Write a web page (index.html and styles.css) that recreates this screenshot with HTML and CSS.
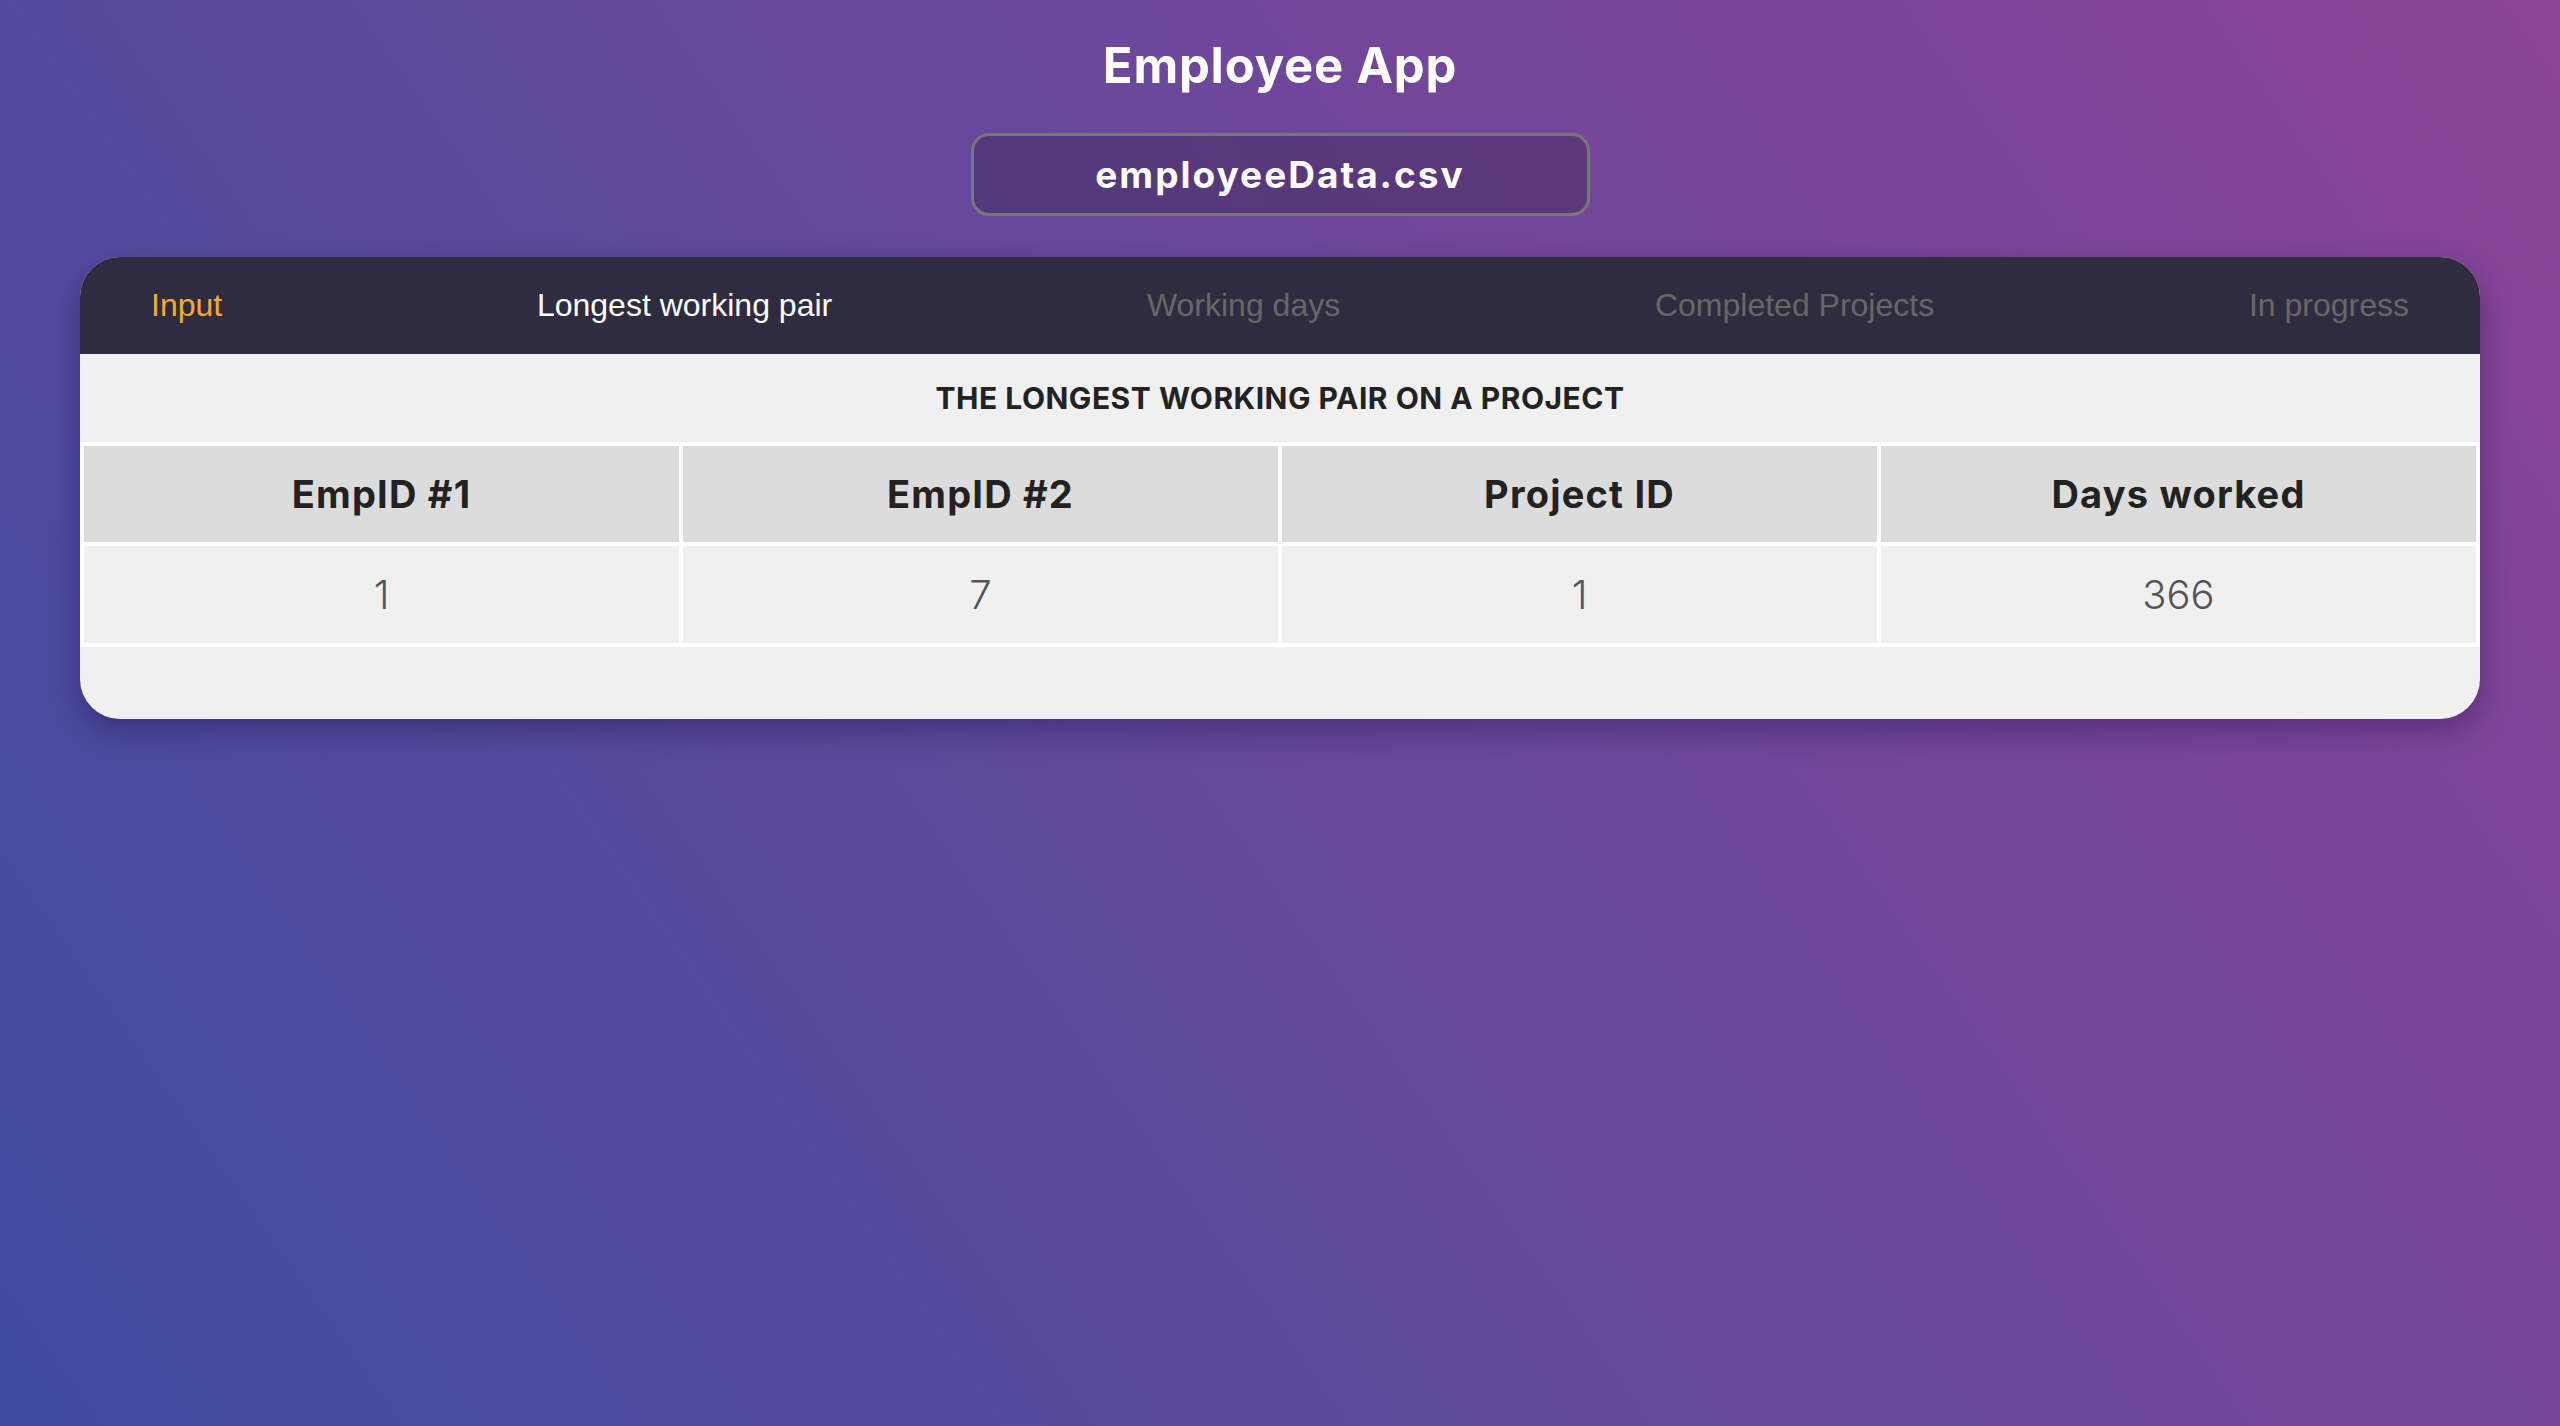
FILE: index.html
```html
<!DOCTYPE html>
<html lang="en">
<head>
<meta charset="utf-8">
<title>Employee App</title>
<link rel="stylesheet" href="styles.css">
</head>
<body>
  <header class="app-header">
    <h1 class="app-title">Employee App</h1>
    <button class="file-button" type="button">employeeData.csv</button>
  </header>
  <main class="card">
    <nav class="tabs">
      <span class="tab tab-input">Input</span>
      <span class="tab tab-active">Longest working pair</span>
      <span class="tab">Working days</span>
      <span class="tab">Completed Projects</span>
      <span class="tab">In progress</span>
    </nav>
    <section class="panel">
      <h2 class="panel-title">THE LONGEST WORKING PAIR ON A PROJECT</h2>
      <table class="pairs">
        <thead>
          <tr>
            <th>EmpID #1</th>
            <th>EmpID #2</th>
            <th>Project ID</th>
            <th>Days worked</th>
          </tr>
        </thead>
        <tbody>
          <tr>
            <td>1</td>
            <td>7</td>
            <td>1</td>
            <td>366</td>
          </tr>
        </tbody>
      </table>
    </section>
  </main>
</body>
</html>
```

FILE: styles.css
```css
html, body {
  margin: 0;
  padding: 0;
}

body {
  min-height: 100vh;
  background: linear-gradient(55deg, #3f4ca0 0%, #8c4497 100%);
  font-family: "Inter", "Open Sans", sans-serif;
  color: #222;
}

.app-header {
  display: flex;
  flex-direction: column;
  align-items: center;
  padding-top: 37px;
}

.app-title {
  margin: 0;
  font-size: 49px;
  line-height: 58px;
  font-weight: 700;
  color: #fff;
  letter-spacing: 0.8px;
}

.file-button {
  margin-top: 38px;
  width: 619px;
  height: 83px;
  border: 3px solid #777;
  border-radius: 18px;
  background: rgba(0, 0, 0, 0.2);
  color: #fff;
  font-family: "Inter", "Open Sans", sans-serif;
  font-size: 37px;
  font-weight: 700;
  letter-spacing: 2px;
  padding: 0;
}

.card {
  margin: 41px 80px 0;
  background: #f0f0f0;
  border-radius: 40px;
  overflow: hidden;
  box-shadow: 0 12px 30px rgba(20, 10, 60, 0.35);
  padding-bottom: 72px;
}

.tabs {
  display: flex;
  justify-content: space-between;
  align-items: center;
  height: 97px;
  padding: 0 71px;
  background: #2f2c3f;
  font-family: "Liberation Sans", Arial, sans-serif;
  font-size: 32px;
}

.tab {
  color: #676767;
}

.tab-input {
  color: #f7aa2c;
}

.tab-active {
  color: #fff;
}

.panel-title {
  margin: 0;
  height: 88px;
  display: flex;
  align-items: center;
  justify-content: center;
  font-size: 30px;
  font-weight: 700;
  letter-spacing: 0.5px;
  color: #222;
}

.pairs {
  width: 100%;
  border-collapse: separate;
  border-spacing: 4px;
  background: #fff;
  table-layout: fixed;
}

.pairs th,
.pairs td {
  padding: 0;
  text-align: center;
}

.pairs th {
  height: 96px;
  background: #dcdcdc;
  font-size: 38px;
  font-weight: 700;
  letter-spacing: 1.2px;
  color: #222;
}

.pairs td {
  height: 97px;
  background: #f0f0f0;
  font-size: 40px;
  font-weight: 300;
  color: #555;
}
```
